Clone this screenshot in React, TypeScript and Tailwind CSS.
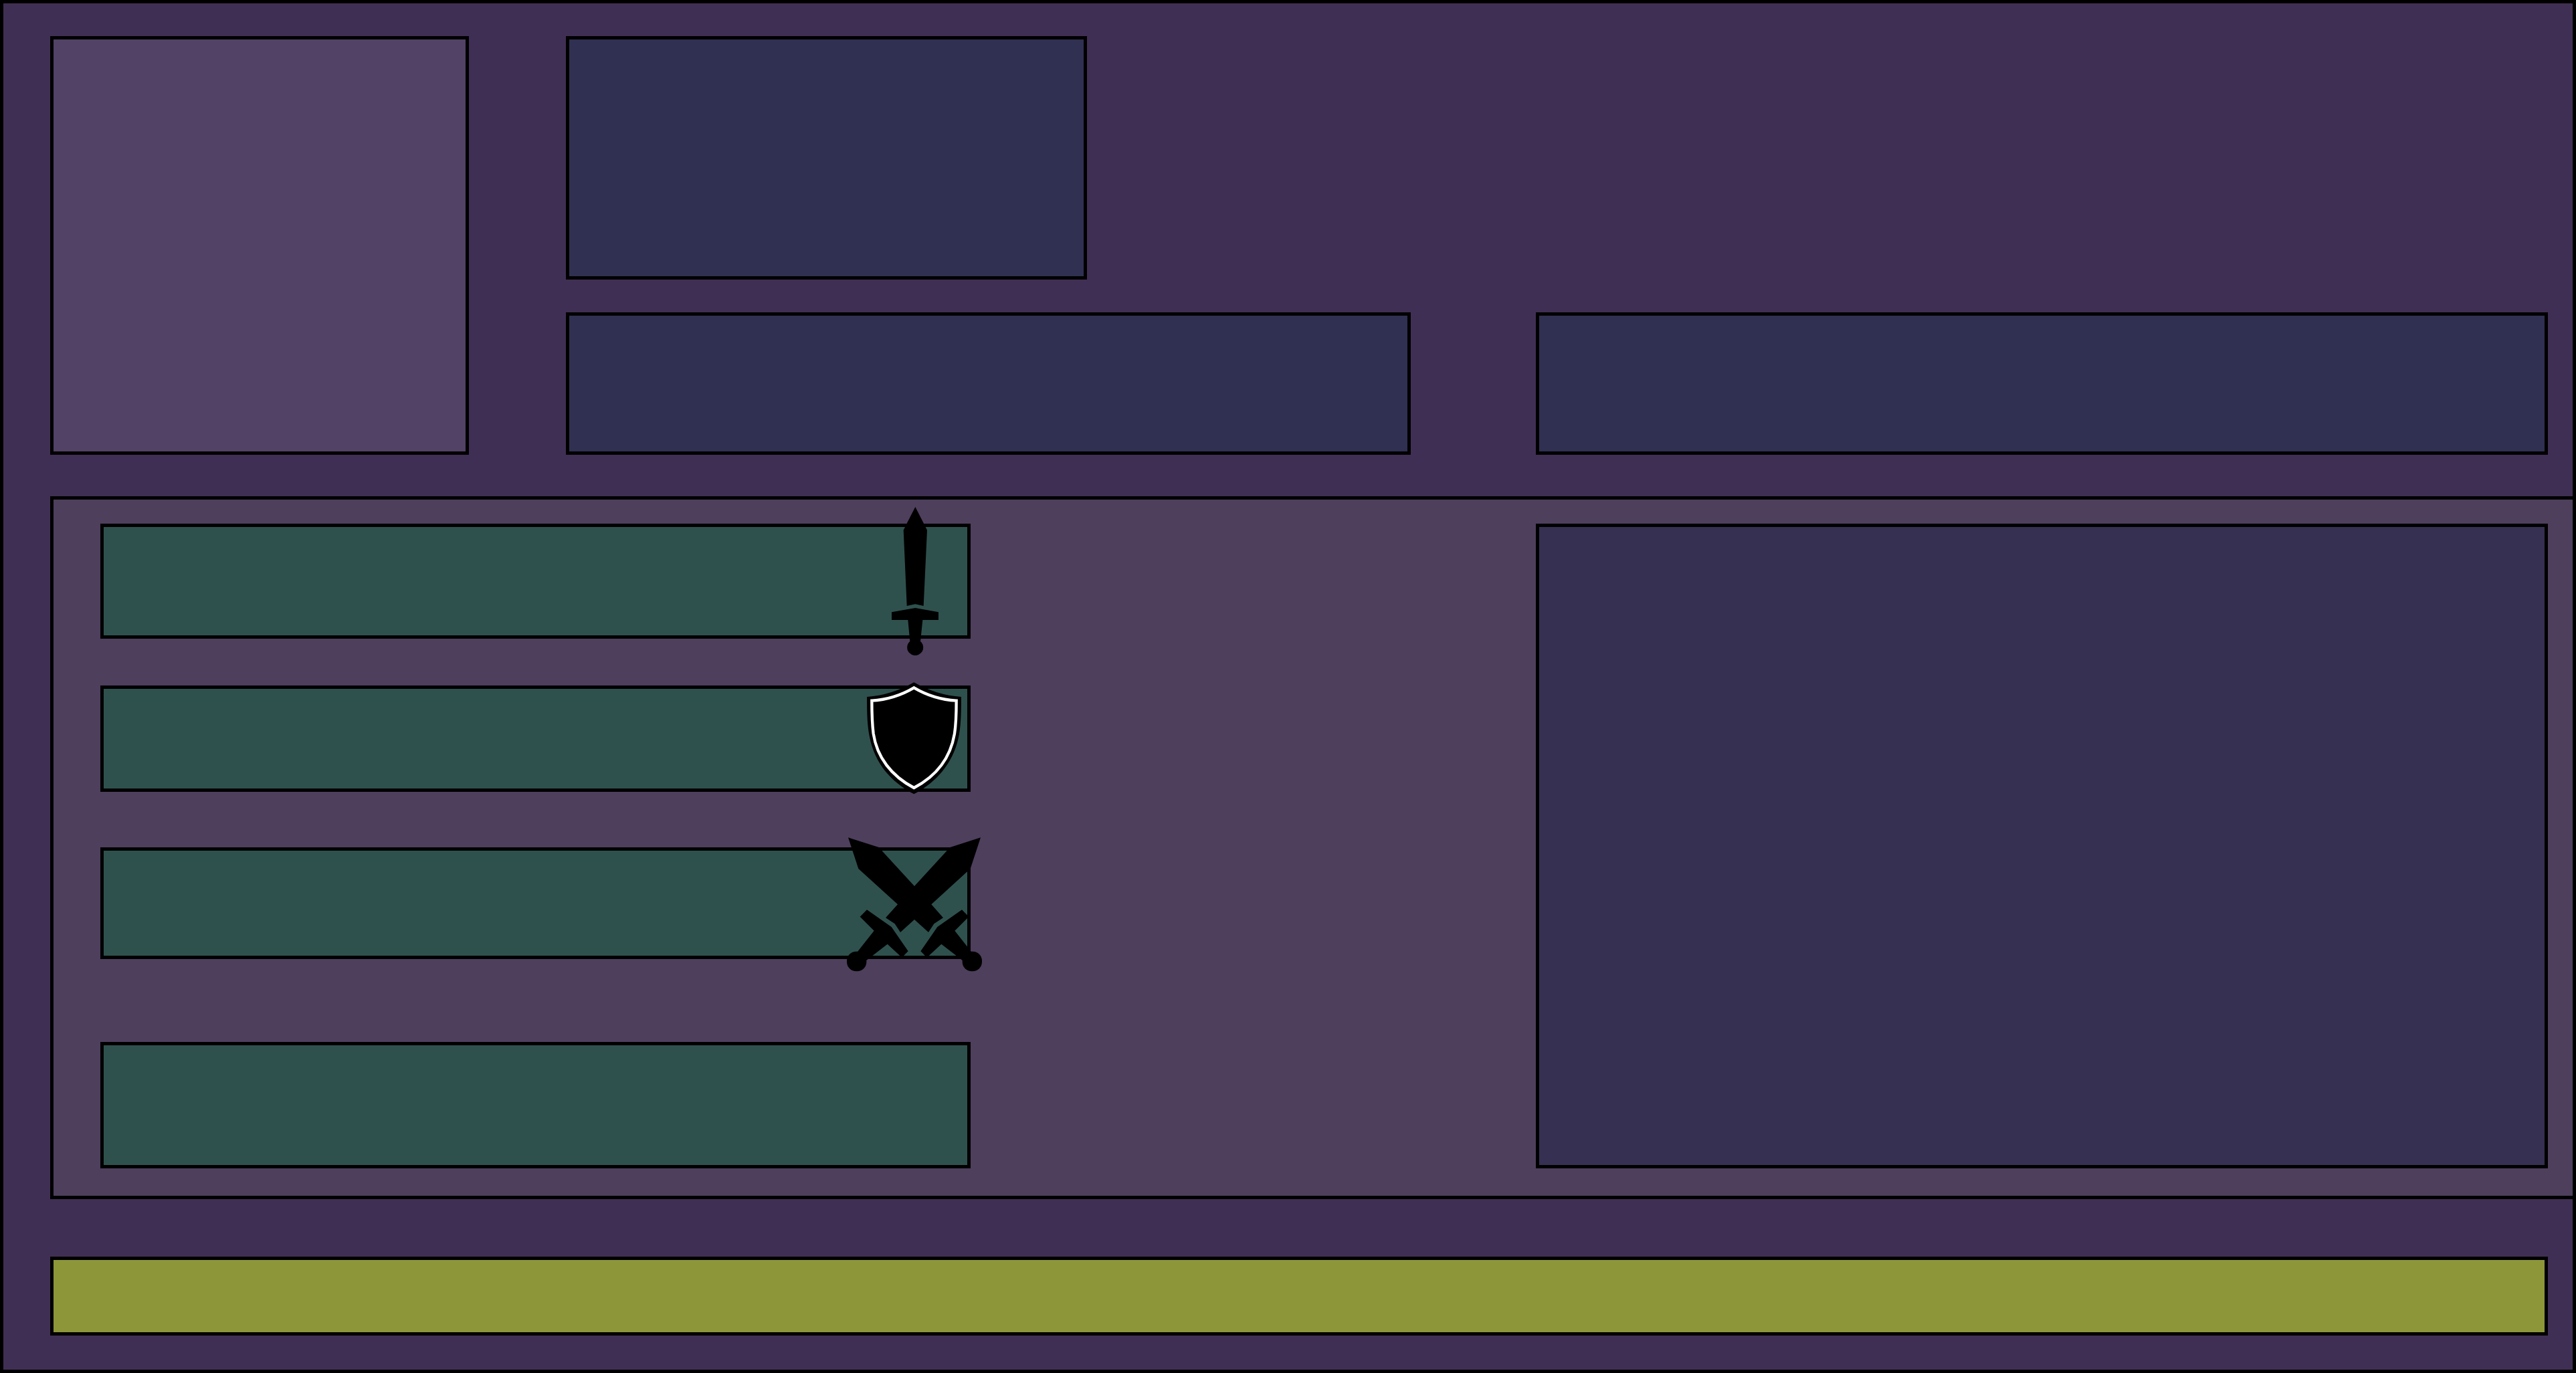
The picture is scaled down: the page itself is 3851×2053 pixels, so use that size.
import type { ReactNode } from "react";

function SwordIcon() {
  return (
    <svg viewBox="273 54 216 666" className="h-[222px] w-[72px] shrink-0" aria-hidden="true">
      <path d="M385 54 L426 134 L438 158 L422 498 L385 490 L347 498 L332 158 L346 130 Z" />
      <path d="M385 507 L491 526 V561 H418 L408 657 A36 36 0 1 1 361 657 L352 561 H279 V526 Z" />
    </svg>
  );
}

function ShieldIcon() {
  return (
    <svg viewBox="165 53 432 522" className="h-[174px] w-[144px] shrink-0" aria-hidden="true">
      <path d="M379 60 Q481 118 591 125 C591 205 589 265 578 311 C552 424 480 508 379 561 C278 508 203 424 180 305 C170 255 168 205 168 125 Q277 118 379 60 Z" />
      <path
        d="M379 84 Q467 136 569 142 C569 208 567 250 561 290 C543 396 480 480 379 533 C278 480 213 396 197 290 C192 250 190 208 190 142 Q291 136 379 84 Z"
        fill="none"
        stroke="#fff"
        strokeWidth="13"
      />
    </svg>
  );
}

function CrossedSwordsIcon() {
  return (
    <svg viewBox="75 56 612 612" className="size-[204px] shrink-0" aria-hidden="true">
      <path d="M84 66 L222 110 L233 123 L381 284 L529 123 L541 110 L678 66 L632 206 L457 366 L510 426 L469 453 L444 491 L381 434 L318 491 L293 453 L252 426 L306 366 L130 206 Z" />
      <path d="M168 390 L278 467 L353 576 L325 604 L260 544 L166 617 L126 578 L200 484 L137 421 Z" />
      <path d="M594 390 L484 467 L409 576 L437 604 L502 544 L596 617 L636 578 L562 484 L625 421 Z" />
      <rect x="78" y="577" width="88" height="89" rx="42" />
      <rect x="596" y="577" width="88" height="89" rx="42" />
    </svg>
  );
}

function StatRow({ className, icon }: { className: string; icon?: ReactNode }) {
  return (
    <li className={`relative border-5 border-black bg-[#2f514e] ${className}`}>
      {icon && (
        <span className="absolute inset-y-0 -right-[23px] flex w-[204px] items-center justify-center">
          {icon}
        </span>
      )}
    </li>
  );
}

export default function App() {
  return (
    <main className="flex min-h-screen flex-col border-5 border-black bg-[#402f54] pt-[49px] pb-[51px] pl-[70px]">
      <header className="mr-[37px] grid h-[626px] grid-cols-[626fr_145fr_1263fr_187fr_1513fr]">
        <div className="border-5 border-black bg-[#524266]" />
        <div className="col-start-3 grid grid-cols-[779fr_484fr] grid-rows-[364fr_213fr] gap-y-[49px]">
          <div className="border-5 border-black bg-[#303052]" />
          <div className="col-span-2 col-start-1 border-5 border-black bg-[#303052]" />
        </div>
        <div className="col-start-5 h-[213px] self-end border-5 border-black bg-[#303052]" />
      </header>

      <section className="mt-[62px] grid grid-cols-[1301fr_845fr_1513fr] border-5 border-r-0 border-black bg-[#4e3f5d] pt-9 pr-[37px] pb-[41px] pl-[70px]">
        <ul>
          <StatRow className="h-[172px]" icon={<SwordIcon />} />
          <StatRow className="mt-[70px] h-[159px]" icon={<ShieldIcon />} />
          <StatRow className="mt-[83px] h-[167px]" icon={<CrossedSwordsIcon />} />
          <StatRow className="mt-[124px] h-[189px]" />
        </ul>
        <div className="col-start-3 border-5 border-black bg-[#363052]" />
      </section>

      <footer className="mt-[86px] mr-[37px] h-[118px] border-5 border-black bg-[#8d9639]" />
    </main>
  );
}
